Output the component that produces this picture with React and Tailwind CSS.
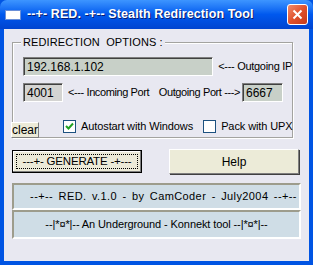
import React from "react";

const font = { fontFamily: "'Liberation Sans', Arial, sans-serif" };

const Check = ({ checked, label }) => (
  <label className="flex items-center gap-[5px] text-[11px] tracking-[-0.1px] text-black whitespace-nowrap">
    <span className="w-[13px] h-[13px] shrink-0 bg-white border border-[#1c5180] flex items-center justify-center">
      {checked && (
        <svg width="9" height="9" viewBox="0 0 9 9">
          <path d="M1 4 L3.5 6.5 L8 1.5" stroke="#21a121" strokeWidth="2" fill="none" />
        </svg>
      )}
    </span>
    {label}
  </label>
);

export default function App() {
  return (
    <div className="w-[313px] h-[265px] flex flex-col bg-[#0054e3] overflow-hidden whitespace-nowrap" style={font}>
      {/* Title bar */}
      <div className="h-[29px] shrink-0 flex items-center pl-[5px] pr-[5px] rounded-t-[7px] bg-gradient-to-b from-[#3d95ff] via-[#0058ee] to-[#0044d0]">
        <div className="w-[16px] h-[10px] bg-white border border-[#6a8fd8] mr-[6px]" />
        <span className="text-white font-bold text-[12.5px] tracking-[0.1px] [text-shadow:1px_1px_0_#0a1e6e]">
          --+- RED. -+-- Stealth Redirection Tool
        </span>
        <div className="ml-auto w-[21px] h-[21px] rounded-[3px] border border-white bg-gradient-to-br from-[#f08a6a] via-[#e0512c] to-[#c53a1a] flex items-center justify-center">
          <svg width="11" height="11" viewBox="0 0 11 11">
            <path d="M1.5 1.5 L9.5 9.5 M9.5 1.5 L1.5 9.5" stroke="white" strokeWidth="2" />
          </svg>
        </div>
      </div>

      {/* Client */}
      <div className="flex-1 mx-[4px] mb-[4px] bg-[#e8e8f1] flex flex-col px-[8px]">
        {/* Group box */}
        <div className="relative mt-[13px] mr-[8px] border border-[#a3a3a0] shadow-[inset_1px_1px_0_#fff,1px_1px_0_#fff] flex flex-col">
          <span className="absolute left-[8px] -top-[7px] px-[2px] bg-[#e8e8f1] text-[11px] leading-[13px] tracking-[0.1px] text-black">
            REDIRECTION&nbsp; OPTIONS :
          </span>
          <div className="flex items-center pl-[10px] pt-[14px]">
            <div className="w-[191px] h-[19px] bg-[#c8d0c8] border border-t-[#7f7f7f] border-l-[#7f7f7f] border-b-white border-r-white shadow-[inset_1px_1px_0_#404040] flex items-center pl-[3px] text-[12px]">
              192.168.1.102
            </div>
            <span className="ml-[5px] text-[11px] tracking-[-0.3px]">&lt;--- Outgoing IP</span>
          </div>
          <div className="flex items-center pl-[10px] mt-[7px]">
            <div className="w-[40px] h-[19px] shrink-0 bg-[#d4d4d2] border border-t-[#7f7f7f] border-l-[#7f7f7f] border-b-white border-r-white shadow-[inset_1px_1px_0_#404040] flex items-center pl-[3px] text-[12px]">
              4001
            </div>
            <span className="ml-[5px] text-[11px] tracking-[-0.4px]">&lt;--- Incoming Port</span>
            <span className="ml-auto text-[11px] tracking-[-0.4px] mr-[2px]">Outgoing Port ---&gt;</span>
            <div className="w-[41px] h-[19px] shrink-0 mr-[9px] bg-[#c8d0c8] border border-t-[#7f7f7f] border-l-[#7f7f7f] border-b-white border-r-white shadow-[inset_1px_1px_0_#404040] flex items-center pl-[3px] text-[12px]">
              6667
            </div>
          </div>
          <div className="flex items-start mt-[16px] -ml-[2px] -mb-[1px]">
            <div className="w-[28px] h-[16px] mt-[4px] shrink-0 bg-[#ecead8] border border-t-white border-l-white border-b-[#7f7f7f] border-r-[#7f7f7f] flex items-end justify-center text-[12px] leading-[14px]">
              clear
            </div>
            <div className="ml-[24px]">
              <Check checked label="Autostart with Windows" />
            </div>
            <div className="ml-[10px]">
              <Check label="Pack with UPX" />
            </div>
          </div>
        </div>

        {/* Buttons */}
        <div className="flex mt-[12px] gap-[27px]">
          <div className="w-[130px] h-[23px] border border-black bg-[#ecead8] shadow-[inset_-1px_-1px_0_#7f7f7f,inset_1px_1px_0_#fff] p-[3px]">
            <div className="w-full h-full border border-dotted border-black flex items-center justify-center text-[11.5px] tracking-[-0.2px]">
              ---+- GENERATE -+---
            </div>
          </div>
          <div className="w-[130px] h-[25px] -mt-[1px] bg-[#ecebd8] border border-t-white border-l-white border-b-[#7f7f7f] border-r-[#7f7f7f] shadow-[1px_1px_0_#404040] flex items-center justify-center text-[12px]">
            Help
          </div>
        </div>

        {/* Info panels */}
        <div className="mt-[9px] flex flex-col">
          <div className="h-[27px] bg-[#cfdde6] border-2 border-t-[#9d9c8c] border-l-[#9d9c8c] border-b-white border-r-white flex items-center justify-center pl-[14px] text-[11px] tracking-[0.4px] [word-spacing:2px]">
            --+-- RED. v.1.0 - by CamCoder - July2004 --+--
          </div>
          <div className="h-[29px] bg-[#cfdde6] border-2 border-t-[#9d9c8c] border-l-[#9d9c8c] border-b-white border-r-white flex items-center justify-center text-[11px] tracking-[-0.1px]">
            --|*¤*|-- An Underground - Konnekt tool --|*¤*|--
          </div>
        </div>
      </div>
    </div>
  );
}
